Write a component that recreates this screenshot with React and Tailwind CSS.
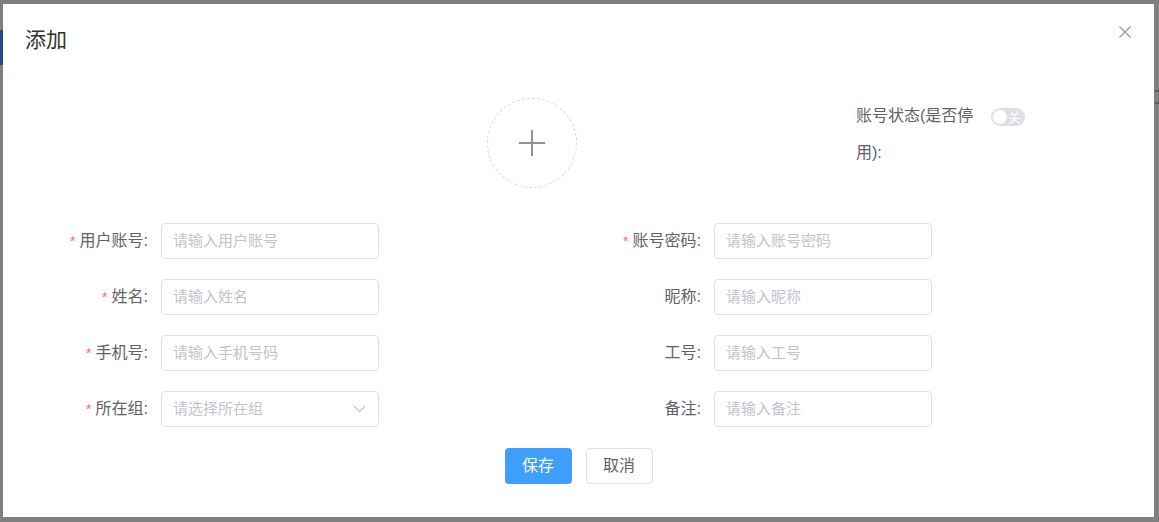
const font = { fontFamily: '"Liberation Sans", "Noto Sans CJK SC", sans-serif' };

const Field = ({ label, placeholder, required, select }) => (
	<div className="flex h-[36px] items-center">
		<label className="w-[100px] shrink-0 whitespace-nowrap pr-[13px] text-right text-[16px] text-[#606266]">
			{required && <span className="mr-[4px] text-[14px] text-[#f56c6c]">*</span>}
			{label}:
		</label>
		<div className="relative flex h-[36px] w-[218px] items-center rounded-[4px] border border-[#dcdfe6] bg-white pl-[11px] text-[15px] text-[#c0c4cc]">
			{placeholder}
			{select && (
				<svg className="absolute right-[12px] top-[13px]" width="13" height="8" viewBox="0 0 13 8" fill="none">
					<path d="M1 1l5.5 5.5L12 1" stroke="#c0c4cc" strokeWidth="1.1" />
				</svg>
			)}
		</div>
	</div>
);

const App = () => {
	return (
		<div className="relative h-[522px] w-[1159px] overflow-hidden bg-[#808080]" style={font}>
			{/* dimmed page behind the overlay */}
			<div className="absolute left-0 top-[30px] h-[35px] w-[3px] bg-[#1e4f7f]" />
			<div className="absolute right-0 top-[90px] h-[14px] w-[4px] border-y-2 border-[#5a5a5a]" />

			<div className="ml-[3px] mt-[4px] flex h-[513px] w-[1151px] flex-col bg-white">
				<div className="relative pl-[22px] pt-[24px]">
					<h2 className="text-[21px] leading-[24px] text-[#303133]">添加</h2>
					<svg className="absolute right-[23px] top-[22px]" width="12" height="12" viewBox="0 0 12 12">
						<path d="M0.5 0.5l11 11M11.5 0.5l-11 11" stroke="#909399" strokeWidth="1.1" />
					</svg>
				</div>

				<div className="mt-[46px] flex">
					<div className="ml-[484px] flex h-[90px] w-[90px] items-center justify-center rounded-full border border-dashed border-[#d9d9d9]">
						<svg width="28" height="28" viewBox="0 0 28 28">
							<path d="M14 1v26M1 14h26" stroke="#8c939d" strokeWidth="2" />
						</svg>
					</div>
					<div className="ml-[279px] flex items-start">
						<div className="-mt-[1px] w-[135px] pr-[12px] text-[16px] leading-[37px] text-[#606266]">账号状态(是否停用):</div>
						<div className="mt-[10px] flex h-[18px] w-[34px] items-center rounded-full bg-[#dcdfe6] px-[2px]">
							<div className="h-[14px] w-[14px] rounded-full bg-white" />
							<span className="ml-[1px] text-[13px] leading-none text-white">关</span>
						</div>
					</div>
				</div>

				<div className="ml-[58px] mt-[35px] grid grid-cols-[553px_553px] gap-y-[20px]">
					<Field required label="用户账号" placeholder="请输入用户账号" />
					<Field required label="账号密码" placeholder="请输入账号密码" />
					<Field required label="姓名" placeholder="请输入姓名" />
					<Field label="昵称" placeholder="请输入昵称" />
					<Field required label="手机号" placeholder="请输入手机号码" />
					<Field label="工号" placeholder="请输入工号" />
					<Field required select label="所在组" placeholder="请选择所在组" />
					<Field label="备注" placeholder="请输入备注" />
				</div>

				<div className="mt-[21px] flex justify-center gap-[14px]">
					<button className="h-[36px] w-[67px] rounded-[4px] bg-[#409eff] text-[16px] text-white">保存</button>
					<button className="h-[36px] w-[67px] rounded-[4px] border border-[#dcdfe6] bg-white text-[16px] text-[#606266]">取消</button>
				</div>
			</div>
		</div>
	);
};

export default App;
